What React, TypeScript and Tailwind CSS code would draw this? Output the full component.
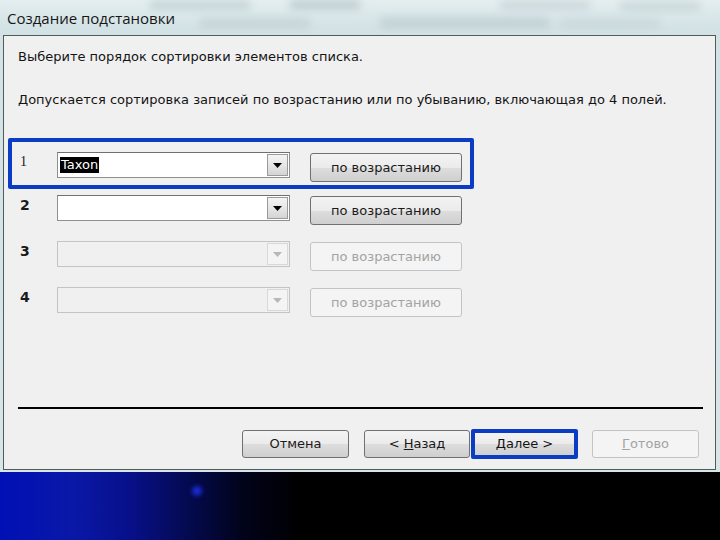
import React from "react";

const face = "font-['DejaVu_Sans',sans-serif]";

const Combo = ({ value, disabled }: { value?: string; disabled?: boolean }) => (
  <div
    className={`flex h-[26px] w-[233px] items-center border ${
      disabled ? "border-[#c4c4c4] bg-[#f0f0f0]" : "border-[#8e8f8f] border-t-[#6f7070] bg-white"
    }`}
  >
    <div className="flex flex-1 items-center pl-[2px]">
      {value && (
        <span className="bg-black px-[1px] text-[13px] leading-[16px] text-white">{value}</span>
      )}
    </div>
    <div
      className={`mr-[1px] flex h-[22px] w-[21px] items-center justify-center border ${
        disabled
          ? "border-[#d8d8d8] bg-[#f4f4f4]"
          : "border-[#9a9a9a] bg-[linear-gradient(180deg,#f4f4f4_0%,#e6e6e6_50%,#d4d4d4_100%)]"
      }`}
    >
      <svg width="9" height="5" viewBox="0 0 9 5">
        <path d="M0 0h9L4.5 5z" fill={disabled ? "#b8b8b8" : "#000"} />
      </svg>
    </div>
  </div>
);

const SortButton = ({ disabled }: { disabled?: boolean }) => (
  <div
    className={`ml-[20px] mt-[1px] flex h-[29px] w-[152px] items-center justify-center rounded-[3px] border text-[13px] ${
      disabled
        ? "border-[#c2c4c6] bg-[#f4f4f4] text-[#a3a3a3]"
        : "border-[#707070] bg-[linear-gradient(180deg,#f3f3f3_0%,#ebebeb_50%,#dddddd_51%,#cfcfcf_100%)] text-[#1a1a1a]"
    }`}
  >
    по возрастанию
  </div>
);

const Row = ({
  n,
  value,
  disabled,
  serif,
}: {
  n: string;
  value?: string;
  disabled?: boolean;
  serif?: boolean;
}) => (
  <div className="flex h-[29px] items-start">
    <div
      className={`w-[37px] pt-[1px] text-[14px] leading-[18px] text-[#1a1a1a] ${
        serif ? "font-['Liberation_Serif',serif]" : "font-bold"
      }`}
    >
      {n}
    </div>
    <Combo value={value} disabled={disabled} />
    <SortButton disabled={disabled} />
  </div>
);

const WizButton = ({
  children,
  disabled,
  className = "",
}: {
  children: React.ReactNode;
  disabled?: boolean;
  className?: string;
}) => (
  <div
    className={`flex h-[28px] items-center justify-center rounded-[3px] border text-[13px] ${
      disabled
        ? "border-[#c2c4c6] bg-[#f4f4f4] text-[#a3a3a3]"
        : "border-[#707070] bg-[linear-gradient(180deg,#f3f3f3_0%,#ebebeb_50%,#dddddd_51%,#cfcfcf_100%)] text-[#1a1a1a]"
    } ${className}`}
  >
    {children}
  </div>
);

export default function App() {
  return (
    <div className={`flex h-[540px] w-[720px] flex-col overflow-hidden bg-black ${face}`}>
      {/* window frame */}
      <div className="relative flex h-[472px] flex-col bg-[linear-gradient(180deg,#e4eef0_0%,#d2e2e5_6%,#d8e6e8_100%)]">
        {/* blurred glass behind the title */}
        <div className="absolute left-[150px] top-[1px] h-[8px] w-[100px] bg-[#8d9ea2] opacity-35 blur-[4px]" />
        <div className="absolute left-[290px] top-[0px] h-[9px] w-[70px] bg-[#7f9093] opacity-35 blur-[4px]" />
        <div className="absolute left-[500px] top-[1px] h-[8px] w-[90px] bg-[#93a3a6] opacity-30 blur-[4px]" />
        <div className="absolute left-[620px] top-[2px] h-[8px] w-[80px] bg-[#93a3a6] opacity-30 blur-[4px]" />
        <div className="absolute left-[200px] top-[18px] h-[10px] w-[110px] bg-[#a8b8bb] opacity-35 blur-[4px]" />
        <div className="absolute left-[380px] top-[17px] h-[11px] w-[170px] bg-[#9fb1b4] opacity-35 blur-[4px]" />
        <div className="absolute left-[560px] top-[18px] h-[10px] w-[100px] bg-[#a8b8bb] opacity-25 blur-[4px]" />

        <div className="relative flex h-[35px] items-center pl-[7px] pt-[2px] font-['Open_Sans',sans-serif] text-[15px] text-[#161616]">
          Создание подстановки
        </div>

        <div className="relative ml-[3px] mr-[4px] flex h-[435px] flex-col border border-[#4f5c5c] bg-[#f0f0f0] text-[#141414]">
          <div className="ml-[14px] mt-[13px] text-[13px] leading-[16px]">
            Выберите порядок сортировки элементов списка.
          </div>
          <div className="ml-[14px] mt-[27px] text-[13px] leading-[16px]">
            Допускается сортировка записей по возрастанию или по убыванию, включающая до 4 полей.
          </div>

          <div className="ml-[4px] mt-[30px] w-[466px] rounded-[2px] border-[4px] border-[#0a3cc4] pb-[4px] pl-[8px] pt-[10px]">
            <Row n="1" value="Taxon" serif />
          </div>

          <div className="ml-[16px] mt-[6px] flex flex-col gap-[17px]">
            <Row n="2" />
            <Row n="3" disabled />
            <Row n="4" disabled />
          </div>

          <div className="ml-[14px] mt-[91px] h-[2px] w-[685px] bg-black" />

          <div className="ml-[238px] mt-[20px] flex items-center">
            <WizButton className="w-[107px]">Отмена</WizButton>
            <WizButton className="ml-[15px] w-[106px]">
              &lt;&nbsp;<span className="underline">Н</span>азад
            </WizButton>
            <div className="ml-[1px] rounded-[2px] border-[4px] border-[#0a3cc4]">
              <div className="flex h-[22px] w-[99px] items-center justify-center bg-[linear-gradient(180deg,#f3f3f3_0%,#ebebeb_50%,#dddddd_51%,#cfcfcf_100%)] text-[13px]">
                <span className="underline">Д</span>алее &gt;
              </div>
            </div>
            <WizButton disabled className="ml-[14px] w-[107px]">
              <span className="underline">Г</span>отово
            </WizButton>
          </div>
        </div>
      </div>

      {/* desktop behind */}
      <div className="relative flex-1 bg-[linear-gradient(90deg,#0010b4_0%,#0a18a8_10%,#07108a_18%,#040a50_26%,#010318_34%,#000000_42%)]">
        <div className="absolute left-[192px] top-[14px] h-[10px] w-[10px] rounded-full bg-[#1a2ad0] blur-[2px]" />
      </div>
    </div>
  );
}
